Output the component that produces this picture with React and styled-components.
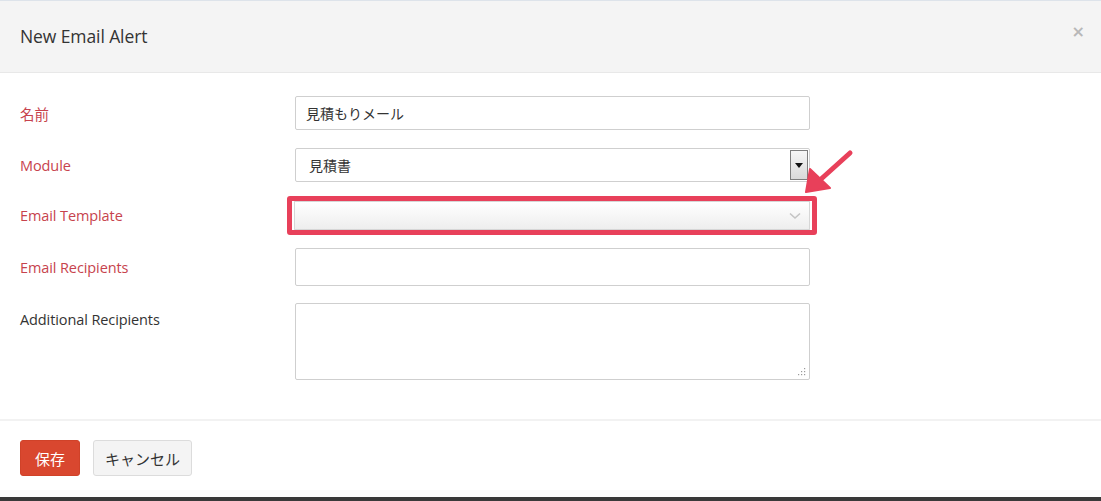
import React from 'react'
import styled, { createGlobalStyle } from 'styled-components';

const Global = createGlobalStyle`
  html, body { margin: 0; padding: 0; background: #fff; }
  body { font-family: "Open Sans", "Noto Sans CJK JP", sans-serif; }
`;

const Modal = styled.div`
  width: 1101px;
  height: 501px;
  box-sizing: border-box;
  border-top: 1px solid #dde3ea;
  border-bottom: 4px solid #3a3a3a;
  display: flex;
  flex-direction: column;
  background: #fff;
`;

const Header = styled.div`
  height: 71px;
  flex: none;
  background: #f4f4f4;
  border-bottom: 1px solid #e8e8e8;
  display: flex;
  align-items: center;
  justify-content: space-between;
  padding: 0 16px 0 20px;
`;

const Title = styled.h2`
  margin: 0;
  font-size: 17.5px;
  font-weight: 400;
  color: #333;
  letter-spacing: -0.1px;
  padding-bottom: 1px;
`;

const Close = styled.span`
  font-family: "DejaVu Sans", sans-serif;
  font-size: 16px;
  color: #b8b8b8;
  font-weight: 700;
  margin-top: -10px;
`;

const Body = styled.div`
  flex: 1;
  padding: 23px 0 0 20px;
  border-bottom: 2px solid #f2f2f2;
`;

const Row = styled.div`
  display: flex;
  align-items: ${({ $top }) => ($top ? 'flex-start' : 'center')};
  margin-top: ${({ $mt }) => $mt || 0}px;
  position: relative;
`;

const Label = styled.label`
  width: 275px;
  flex: none;
  font-size: 14.5px;
  letter-spacing: -0.1px;
  color: ${({ $plain }) => ($plain ? '#333' : '#c7434d')};
  padding-top: ${({ $top }) => ($top ? '7px' : '0')};
`;

const Field = styled.div`
  width: 515px;
  height: ${({ $h }) => $h || 34}px;
  box-sizing: border-box;
  border: 1px solid #cfcfcf;
  border-radius: 2px;
  background: #fff;
  display: flex;
  align-items: center;
  padding: 0 10px;
  color: #333;
  position: relative;
`;

const Value = styled.span`
  font-family: "Noto Sans CJK JP", sans-serif;
  font-size: 14px;
  color: #333;
  margin-left: ${({ $ml }) => $ml || 0}px;
`;

const NativeArrow = styled.div`
  position: absolute;
  right: 1px;
  top: 1px;
  bottom: 1px;
  width: 18px;
  box-sizing: border-box;
  border: 1px solid #7d7d7d;
  background: linear-gradient(#f6f6f6, #d9d9d9);
  display: flex;
  align-items: center;
  justify-content: center;
  &::after {
    content: '';
    border-left: 4px solid transparent;
    border-right: 4px solid transparent;
    border-top: 5px solid #111;
  }
`;

const Highlight = styled.div`
  margin-left: -8px;
  width: 530px;
  height: 39px;
  box-sizing: border-box;
  border: 5px solid #e8405a;
  border-radius: 3px;
  padding: 0 2px 0 2px;
  display: flex;
  align-items: center;
`;

const TemplateSelect = styled.div`
  flex: 1;
  height: 29px;
  box-sizing: border-box;
  border: 1px solid #d6d6d6;
  background: linear-gradient(#ffffff, #eeeeee);
  display: flex;
  align-items: center;
  justify-content: flex-end;
  padding-right: 8px;
`;

const Arrow = styled.svg`
  position: absolute;
  left: 740px;
  top: -60px;
  pointer-events: none;
`;

const Grip = styled.svg`
  position: absolute;
  right: 3px;
  bottom: 3px;
`;

const Footer = styled.div`
  height: 76px;
  flex: none;
  display: flex;
  gap: 13px;
  padding: 19px 0 0 20px;
  box-sizing: border-box;
`;

const Button = styled.button`
  width: ${({ $w }) => $w}px;
  height: 36px;
  box-sizing: border-box;
  padding: 0;
  border-radius: 3px;
  font-family: "Noto Sans CJK JP", sans-serif;
  font-size: 15px;
  cursor: pointer;
  border: 1px solid ${({ $primary }) => ($primary ? '#d04229' : '#dcdcdc')};
  background: ${({ $primary }) => ($primary ? '#d9472f' : '#f4f4f4')};
  color: ${({ $primary }) => ($primary ? '#fff' : '#333')};
`;

const App = () => {
  return (
    <Modal>
      <Global />
      <Header>
        <Title>New Email Alert</Title>
        <Close>×</Close>
      </Header>
      <Body>
        <Row>
          <Label>名前</Label>
          <Field><Value>見積もりメール</Value></Field>
        </Row>
        <Row $mt={18}>
          <Label>Module</Label>
          <Field>
            <Value $ml={3}>見積書</Value>
            <NativeArrow />
          </Field>
        </Row>
        <Row $mt={14}>
          <Label>Email Template</Label>
          <Highlight>
            <TemplateSelect>
              <svg width="12" height="8" viewBox="0 0 12 8">
                <path d="M1 1.5 L6 6 L11 1.5" fill="none" stroke="#c4c4c4" strokeWidth="1.6" />
              </svg>
            </TemplateSelect>
          </Highlight>
          <Arrow width="100" height="100" viewBox="0 0 100 100">
            <path d="M90 17 L60 44" stroke="#e8405a" strokeWidth="5" strokeLinecap="round" />
            <polygon points="46,56 50,33 70,52" fill="#e8405a" stroke="#e8405a" strokeWidth="2" strokeLinejoin="round" />
          </Arrow>
        </Row>
        <Row $mt={13}>
          <Label>Email Recipients</Label>
          <Field $h={38} />
        </Row>
        <Row $mt={17} $top>
          <Label $plain $top>Additional Recipients</Label>
          <Field $h={77}>
            <Grip width="9" height="9" viewBox="0 0 9 9">
              <g fill="#9a9a9a">
                <rect x="7" y="1" width="1.2" height="1.2" />
                <rect x="4" y="4" width="1.2" height="1.2" />
                <rect x="7" y="4" width="1.2" height="1.2" />
                <rect x="1" y="7" width="1.2" height="1.2" />
                <rect x="4" y="7" width="1.2" height="1.2" />
                <rect x="7" y="7" width="1.2" height="1.2" />
              </g>
            </Grip>
          </Field>
        </Row>
      </Body>
      <Footer>
        <Button $primary $w={60}>保存</Button>
        <Button $w={99}>キャンセル</Button>
      </Footer>
    </Modal>
  )
}

export default App
